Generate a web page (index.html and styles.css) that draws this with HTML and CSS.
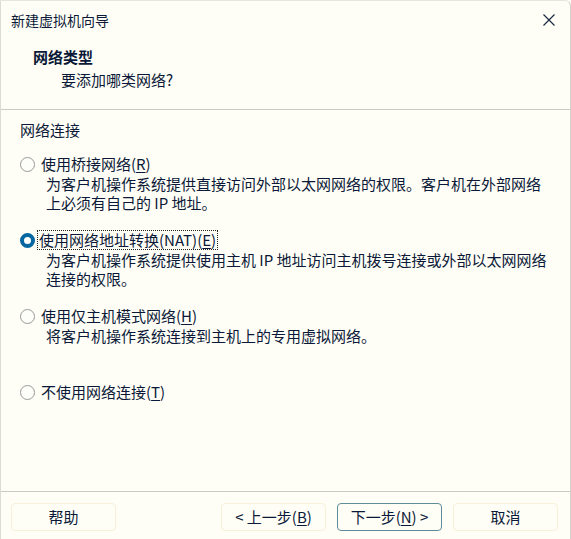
FILE: index.html
```html
<html>
    <head>
        <title>新建虚拟机向导</title>
        <link rel="stylesheet" href="styles.css">
    </head>
    <body>
        <div class="window">
            <div class="titlebar">
                <span class="title">新建虚拟机向导</span>
                <svg class="close" width="12" height="12" viewBox="0 0 12 12">
                    <path d="M0.5 0.5 L11.5 11.5 M11.5 0.5 L0.5 11.5" stroke="#1b2a44" stroke-width="1.2" fill="none"/>
                </svg>
            </div>

            <div class="header">
                <div class="header-title">网络类型</div>
                <div class="header-sub">要添加哪类网络?</div>
            </div>

            <div class="content">
                <div class="group-label">网络连接</div>

                <div class="option first">
                    <div class="option-row">
                        <span class="radio"></span>
                        <span class="label">使用桥接网络(<u>R</u>)</span>
                    </div>
                    <div class="desc">为客户机操作系统提供直接访问外部以太网网络的权限。客户机在外部网络<br>上必须有自己的 IP 地址。</div>
                </div>

                <div class="option">
                    <div class="option-row">
                        <span class="radio checked"></span>
                        <span class="label focused">使用网络地址转换(NAT)(<u>E</u>)</span>
                    </div>
                    <div class="desc">为客户机操作系统提供使用主机 IP 地址访问主机拨号连接或外部以太网网络<br>连接的权限。</div>
                </div>

                <div class="option">
                    <div class="option-row">
                        <span class="radio"></span>
                        <span class="label">使用仅主机模式网络(<u>H</u>)</span>
                    </div>
                    <div class="desc">将客户机操作系统连接到主机上的专用虚拟网络。</div>
                </div>

                <div class="option last">
                    <div class="option-row">
                        <span class="radio"></span>
                        <span class="label">不使用网络连接(<u>T</u>)</span>
                    </div>
                </div>
            </div>

            <div class="footer">
                <button class="btn">帮助</button>
                <div class="spacer"></div>
                <button class="btn">&lt; 上一步(<u>B</u>)</button>
                <button class="btn default">下一步(<u>N</u>) &gt;</button>
                <button class="btn">取消</button>
            </div>
        </div>
    </body>
</html>
```

FILE: styles.css
```css
body {
    margin: 0;
    width: 571px;
    height: 539px;
    overflow: hidden;
    background-color: #fffef6;
    font-family: "Noto Sans CJK SC", "Liberation Sans", sans-serif;
    font-size: 15px;
    color: #0b1938;
}

.window {
    box-sizing: border-box;
    width: 571px;
    height: 539px;
    border-left: 1px solid #dcdcd2;
    border-right: 1px solid #d2d2c8;
    border-top: 1px solid #e6e6dc;
    border-top-right-radius: 6px;
    display: flex;
    flex-direction: column;
}

/* Title bar */
.titlebar {
    height: 37px;
    display: flex;
    align-items: center;
    padding: 0 15px 0 10px;
}

.title {
    flex: 1;
    font-size: 14px;
    line-height: 20px;
}

.close {
    display: block;
}

/* Header */
.header {
    padding: 9px 0 19px 32px;
    border-bottom: 1px solid #cbcbc2;
}

.header-title {
    font-weight: bold;
    line-height: 20px;
}

.header-sub {
    margin-top: 3px;
    padding-left: 28px;
    line-height: 20px;
}

/* Options */
.content {
    flex: 1;
    padding: 10px 0 0 19px;
    border-bottom: 1px solid #cbcbc2;
}

.group-label {
    line-height: 20px;
}

.option {
    margin-top: 18px;
}

.option.first {
    margin-top: 14px;
}

.option.last {
    margin-top: 37px;
}

.option-row {
    display: flex;
    align-items: center;
    height: 20px;
}

.radio {
    box-sizing: border-box;
    width: 15px;
    height: 15px;
    border-radius: 50%;
    border: 1px solid #999999;
    background-color: #fdfdf9;
    margin-right: 6px;
}

.radio.checked {
    border: 4px solid #0767a0;
    background-color: #ffffff;
    margin-right: 3px;
}

.label {
    line-height: 18px;
}

.label.focused {
    outline: 1px dotted #222;
    padding: 0 1px;
}

.desc {
    padding-left: 26px;
    line-height: 19px;
}

u {
    text-underline-offset: 2px;
}

/* Buttons */
.footer {
    height: 36px;
    display: flex;
    align-items: flex-start;
    gap: 11px;
    padding: 11px 12px 0 10px;
}

.spacer {
    flex: 1;
}

.btn {
    width: 105px;
    height: 28px;
    padding: 0 0 2px 0;
    font-family: inherit;
    font-size: 15px;
    color: #0b1938;
    background-color: #fffef6;
    border: 1px solid #f7f0da;
    border-radius: 4px;
}

.btn.default {
    border: 1px solid #5e8c98;
}
```
